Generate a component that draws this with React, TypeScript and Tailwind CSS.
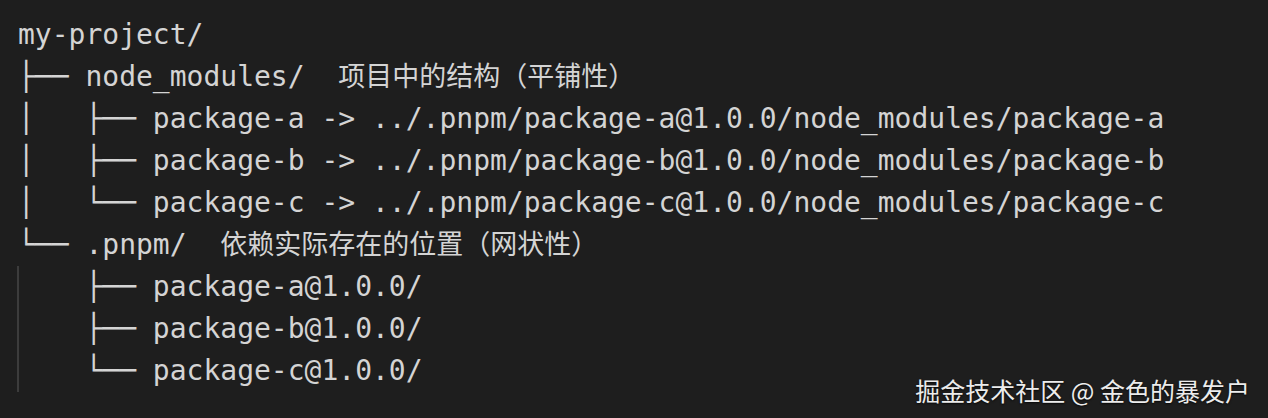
import React from 'react';

type Line = { tree: string; note?: string };

const treeLines: Line[] = [
  { tree: 'my-project/' },
  { tree: '├── node_modules/  ', note: '项目中的结构（平铺性）' },
  { tree: '│   ├── package-a -> ../.pnpm/package-a@1.0.0/node_modules/package-a' },
  { tree: '│   ├── package-b -> ../.pnpm/package-b@1.0.0/node_modules/package-b' },
  { tree: '│   └── package-c -> ../.pnpm/package-c@1.0.0/node_modules/package-c' },
  { tree: '└── .pnpm/  ', note: '依赖实际存在的位置（网状性）' },
];

const storeLines: string[] = [
  '    ├── package-a@1.0.0/',
  '    ├── package-b@1.0.0/',
  '    └── package-c@1.0.0/',
];

const App: React.FC = () => {
  return (
    <div className="relative w-[1268px] h-[418px] overflow-hidden bg-[#1e1e1e]">
      <div className="font-['DejaVu_Sans_Mono',monospace] pl-[18px] pt-[14px] text-[28px] leading-[42px] text-[#d4d4d4] whitespace-pre">
        {treeLines.map((line) => (
          <div key={line.tree} className="h-[42px]">
            {line.tree}
            {line.note && (
              <span className="font-['Noto_Sans_CJK_SC',sans-serif] text-[27px] leading-none">
                {line.note}
              </span>
            )}
          </div>
        ))}
        <div className="-ml-px border-l-2 border-[#3c3c3c]">
          {storeLines.map((line) => (
            <div key={line} className="-ml-px h-[42px]">
              {line}
            </div>
          ))}
        </div>
      </div>

      {/* watermark */}
      <div className="absolute right-[18px] bottom-[14px] font-['Noto_Sans_CJK_SC',sans-serif] text-[25px] leading-[28px] text-[#ececec] [text-shadow:0_1px_2px_rgba(0,0,0,0.8)]">
        掘金技术社区 @ 金色的暴发户
      </div>
    </div>
  );
};

export default App;
